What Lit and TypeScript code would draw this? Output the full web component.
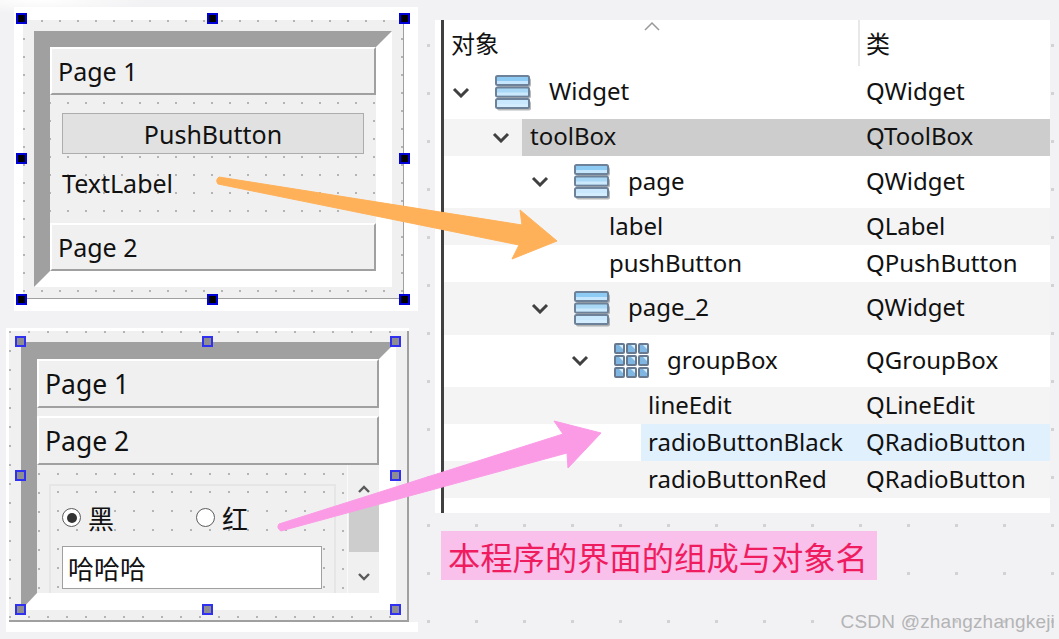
import { LitElement, html, css, svg } from "lit";
import { customElement } from "lit/decorators.js";

type Row = { name: string; cls: string; depth: number; arrow?: boolean; icon?: "stack" | "grid"; alt?: boolean; sel?: "gray" | "blue" };

const rows: Row[] = [
  { name: "Widget", cls: "QWidget", depth: 0, arrow: true, icon: "stack" },
  { name: "toolBox", cls: "QToolBox", depth: 40, arrow: true, alt: true, sel: "gray" },
  { name: "page", cls: "QWidget", depth: 79, arrow: true, icon: "stack" },
  { name: "label", cls: "QLabel", depth: 119, alt: true },
  { name: "pushButton", cls: "QPushButton", depth: 119 },
  { name: "page_2", cls: "QWidget", depth: 79, arrow: true, icon: "stack", alt: true },
  { name: "groupBox", cls: "QGroupBox", depth: 119, arrow: true, icon: "grid" },
  { name: "lineEdit", cls: "QLineEdit", depth: 158, alt: true },
  { name: "radioButtonBlack", cls: "QRadioButton", depth: 158, sel: "blue" },
  { name: "radioButtonRed", cls: "QRadioButton", depth: 158, alt: true },
];

const chevron = (w = 18, h = 11) => html`<svg width=${w} height=${h} viewBox="0 0 18 11"><path d="M2 2 L9 9 L16 2" fill="none" stroke="#404040" stroke-width="3"/></svg>`;

const stackIcon = html`<svg class="ico" width="37" height="36" viewBox="0 0 37 36">
  <g fill="#000" opacity=".28"><rect x="2" y="3" width="34" height="9" rx="2"/><rect x="2" y="14.5" width="34" height="9" rx="2"/><rect x="2" y="26" width="34" height="9.5" rx="2"/></g>
  <g stroke="#6d8199" stroke-width="2">
    <rect x="1" y="1" width="33" height="9" rx="1.5" fill="#8dcbf4"/>
    <rect x="1" y="12.5" width="33" height="9" rx="1.5" fill="#a9d8f6"/>
    <rect x="1" y="24" width="33" height="9" rx="1.5" fill="#c9e8fd"/>
  </g>
  <g fill="#d8efff" opacity=".75"><rect x="2" y="6" width="31" height="3"/><rect x="2" y="17.5" width="31" height="3"/><rect x="2" y="29" width="31" height="3"/></g>
</svg>`;

const gridCells = [0, 12, 24].flatMap((y) => [0, 12, 24].map((x) => [x, y]));
const gridIcon = html`<svg class="ico" width="36" height="36" viewBox="0 0 36 36">
  ${gridCells.map(([x, y]) => svg`
    <rect x=${x + 1} y=${y + 1} width="9" height="9" rx="1" fill="#7fb6e2" stroke="#66798f" stroke-width="2"/>
    <path d="M${x + 5} ${y + 2} h4 v4 z" fill="#d6effe"/>`)}
</svg>`;

@customElement("app-root")
export class AppRoot extends LitElement {
  static styles = css`
    :host {
      display: block;
      position: relative;
      width: 1059px;
      height: 639px;
      overflow: hidden;
      font-family: "Noto Sans", "Noto Sans CJK SC", sans-serif;
      color: #111;
      background-color: #f2f2f4;
    }
    .canvas {
      width: 1059px;
      height: 639px;
      display: grid;
      grid-template-columns: 435px 1fr;
      background-image:
        radial-gradient(ellipse 110px 14px at 40px 0, #fff, transparent),
        radial-gradient(circle at 1.5px 1.5px, #d2d2d4 1.5px, transparent 2px);
      background-size: 100% 100%, 48px 48px;
      background-position: 0 0, 427px 44px;
    }
    .left { display: flex; flex-direction: column; }
    .panel1 { margin: 7px 0 0 14px; width: 404px; height: 304px; box-sizing: border-box; background: #fff; padding: 13px 14px 12px 9px; }
    .panel2 { margin: 17px 0 0 6px; width: 412px; display: flex; flex-direction: column; }
    .panel2-box { width: 403px; height: 294px; box-sizing: border-box; background: #fff; padding: 3px 0 0 3px; }
    .strip { height: 10px; background: #fff; }

    .form {
      position: relative;
      box-sizing: border-box;
      background-color: #f0f0f0;
      border-right: 1px solid #a0a0a0;
      border-bottom: 1px solid #a0a0a0;
      background-image: radial-gradient(circle at 1px 1px, #b4b4b4 1px, transparent 1.5px);
      background-size: 18px 18px;
    }
    .form.f1 { width: 381px; height: 279px; padding: 11px 0 0 11px; }
    .form.f2 { width: 400px; height: 291px; padding: 11px 0 0 12px; border-width: 2px; background-size: 19px 19px; }

    .handle { position: absolute; box-sizing: border-box; width: 11px; height: 11px; }
    .f1 .handle { background: #000; border: 2px solid #0000d8; }
    .f2 .handle { background: #8e8e92; border: 2px solid #3030f0; }

    .frame {
      box-sizing: border-box;
      border-style: solid;
      border-color: #a0a0a0 #fff #fff #a0a0a0;
      background: #f0f0f0;
      display: flex;
      flex-direction: column;
    }
    .f1 .frame { width: 358px; height: 256px; border-width: 16px; }
    .f2 .frame { width: 375px; height: 268px; border-width: 17px 17px 17px 16px; }

    .tab {
      box-sizing: border-box;
      background: #f0f0f0;
      border-style: solid;
      border-width: 2px;
      border-color: #fff #a0a0a0 #a0a0a0 #fff;
      display: flex;
      align-items: center;
      padding-left: 6px;
      font-size: 25px;
      flex: none;
    }
    .f1 .tab { height: 48px; width: 326px; }
    .f2 .tab { height: 49px; width: 342px; font-size: 26.5px; }
    .f2 .tab + .tab { margin-top: 8px; }

    .dotted {
      background-image: radial-gradient(circle at 1px 1px, #b4b4b4 1px, transparent 1.5px);
    }
    .content1 { height: 128px; padding: 18px 0 0 12px; box-sizing: border-box; background-size: 18px 18px; background-position: 17px 7px; }
    .button {
      box-sizing: border-box;
      width: 302px;
      height: 41px;
      background: #e1e1e1;
      border: 1px solid #adadad;
      display: flex;
      align-items: center;
      justify-content: center;
      font-size: 25px;
    }
    .textlabel { margin-top: 10px; height: 38px; display: flex; align-items: center; font-size: 25px; }

    .content2 { flex: 1; min-height: 0; display: flex; overflow: hidden; background-size: 19px 19px; background-position: 1px 8px; }
    .groupwrap { width: 310px; flex: none; padding: 19px 0 0 12px; box-sizing: border-box; }
    .group {
      box-sizing: border-box;
      width: 287px;
      height: 140px;
      border: 2px solid #e6e6e6;
      padding: 22px 0 0 11px;
      background-color: #f0f0f0;
      background-image: radial-gradient(circle at 1px 1px, #b4b4b4 1px, transparent 1.5px);
      background-size: 19px 19px;
      background-position: 6px 5px;
    }
    .radios { display: flex; height: 19px; align-items: center; }
    .radio { width: 134px; display: flex; align-items: center; gap: 7px; font-size: 26px; line-height: 19px; }
    .radio b { font-weight: 400; margin-top: 3px; }
    .dot {
      box-sizing: border-box;
      width: 19px;
      height: 19px;
      border: 1px solid #5c5c5c;
      border-radius: 50%;
      background: #fff;
      display: flex;
      align-items: center;
      justify-content: center;
    }
    .dot i { width: 10px; height: 10px; border-radius: 50%; background: #333; }
    .lineedit {
      box-sizing: border-box;
      margin-top: 19px;
      width: 260px;
      height: 43px;
      background: #fff;
      border: 1px solid #a0a0a0;
      padding-left: 5px;
      display: flex;
      align-items: center;
      font-size: 26px;
    }
    .scroll {
      width: 32px;
      box-sizing: border-box;
      border-left: 1px solid #fafafa;
      background: #f0f0f0;
      display: flex;
      flex-direction: column;
      align-items: center;
      padding-top: 20px;
    }
    .scroll .thumb { width: 30px; height: 47px; background: #cdcdcd; margin: 12px 0 21px; flex: none; }
    .scroll svg { display: block; flex: none; }

    .right { display: flex; flex-direction: column; }
    .tree {
      margin-top: 20px;
      width: 615px;
      height: 493px;
      box-sizing: border-box;
      background: #fff;
      padding-left: 9px;
      position: relative;
      font-size: 24px;
    }
    .tree::before {
      content: "";
      position: absolute;
      left: 6px;
      top: 0;
      bottom: 0;
      width: 3px;
      background: #404040;
    }
    .head { display: grid; grid-template-columns: 414px 1fr; height: 46px; position: relative; }
    .head > div { display: flex; align-items: center; padding: 0 0 2px 7px; }
    .head > div + div { border-left: 2px solid #e8e8e8; padding-left: 6px; }
    .caret { position: absolute; left: 200px; top: 1px; }
    .row { display: grid; grid-template-columns: 414px 1fr; }
    .row.short { height: 37px; }
    .row.tall { height: 52.5px; }
    .row.alt { background: #f4f4f4; }
    .c1 { display: flex; align-items: center; min-width: 0; }
    .arrow { width: 34px; flex: none; display: flex; justify-content: center; align-items: center; }
    .ico { display: block; margin: 1px 17px 0; flex: none; filter: blur(0.4px); }
    .name { flex: 1; align-self: stretch; display: flex; align-items: center; padding: 0 0 3px 8px; margin-left: 4px; }
    .tall .name { padding-left: 0; margin-left: 0; }
    .c2 { display: flex; align-items: center; padding: 0 0 3px 8px; }
    .sel-gray .name, .sel-gray .c2 { background: #cdcdcd; }
    .sel-blue .name, .sel-blue .c2 { background: #e1f0fd; }
    .sel-blue .name { margin-left: 5px; padding-left: 7px; }

    .caption {
      margin: 18px 0 0 6px;
      width: 436px;
      height: 49px;
      box-sizing: border-box;
      background: #f9c0ec;
      color: #f01c60;
      font-family: "Noto Sans CJK SC", sans-serif;
      font-size: 32.3px;
      padding-left: 7px;
      display: flex;
      align-items: center;
      white-space: nowrap;
    }
    .mark {
      position: absolute;
      right: 4px;
      bottom: 6px;
      font-family: "Liberation Sans", sans-serif;
      font-size: 19px;
      letter-spacing: 0.2px;
      color: #b4b4b6;
    }
    .overlay { position: absolute; left: 0; top: 0; pointer-events: none; }
  `;

  private handles(xs: number[], ys: number[]) {
    const out = [];
    for (const [i, y] of ys.entries()) {
      for (const [j, x] of xs.entries()) {
        if (i === 1 && j === 1) continue;
        out.push(html`<span class="handle" style="left:${x}px;top:${y}px"></span>`);
      }
    }
    return out;
  }

  render() {
    return html`
      <div class="canvas">
        <div class="left">
          <div class="panel1">
            <div class="form f1">
              <div class="frame">
                <div class="tab">Page 1</div>
                <div class="content1 dotted">
                  <div class="button">PushButton</div>
                  <div class="textlabel">TextLabel</div>
                </div>
                <div class="tab">Page 2</div>
              </div>
              ${this.handles([-7, 184, 376], [-7, 133, 274])}
            </div>
          </div>
          <div class="panel2">
            <div class="panel2-box">
              <div class="form f2">
                <div class="frame">
                  <div class="tab">Page 1</div>
                  <div class="tab">Page 2</div>
                  <div class="content2 dotted">
                    <div class="groupwrap">
                      <div class="group">
                        <div class="radios">
                          <div class="radio"><span class="dot"><i></i></span><b>黑</b></div>
                          <div class="radio"><span class="dot"></span><b>红</b></div>
                        </div>
                        <div class="lineedit">哈哈哈</div>
                      </div>
                    </div>
                    <div class="scroll">
                      <svg width="12" height="8" viewBox="0 0 12 8"><path d="M1 7 L6 2 L11 7" fill="none" stroke="#5a5a5a" stroke-width="2.4"/></svg>
                      <div class="thumb"></div>
                      <svg width="12" height="8" viewBox="0 0 12 8"><path d="M1 1 L6 6 L11 1" fill="none" stroke="#5a5a5a" stroke-width="2.4"/></svg>
                    </div>
                  </div>
                </div>
                ${this.handles([6, 193, 381], [5, 139, 273])}
              </div>
            </div>
            <div class="strip"></div>
          </div>
        </div>
        <div class="right">
          <div class="tree">
            <div class="head">
              <div>对象</div>
              <div>类</div>
              <svg class="caret" width="16" height="10" viewBox="0 0 16 10"><path d="M1 9 L8 2 L15 9" fill="none" stroke="#9a9a9a" stroke-width="1.5"/></svg>
            </div>
            ${rows.map(
              (r) => html`
                <div class="row ${r.icon ? "tall" : "short"} ${r.alt ? "alt" : ""} ${r.sel ? "sel-" + r.sel : ""}">
                  <div class="c1" style="padding-left:${r.depth}px">
                    <span class="arrow">${r.arrow ? chevron() : ""}</span>
                    ${r.icon === "stack" ? stackIcon : r.icon === "grid" ? gridIcon : ""}
                    <span class="name">${r.name}</span>
                  </div>
                  <div class="c2">${r.cls}</div>
                </div>
              `
            )}
          </div>
          <div class="caption">本程序的界面的组成与对象名</div>
        </div>
      </div>
      <svg class="overlay" width="1059" height="639" viewBox="0 0 1059 639">
        <path d="M219 177 L522 225 L520 210 L557 241 L512 259 L519 245 L218 184 Q215 180 219 177 Z" fill="#ffb15a" stroke="#ffb15a" stroke-width="1" stroke-linejoin="round"/>
        <path d="M279 524 L563 434 L554 421 L601 433 L568 468 L567 453 L281 531 Q276 528 279 524 Z" fill="#fb9be6" stroke="#fb9be6" stroke-width="1" stroke-linejoin="round"/>
      </svg>
      <div class="mark">CSDN @zhangzhangkeji</div>
    `;
  }
}
